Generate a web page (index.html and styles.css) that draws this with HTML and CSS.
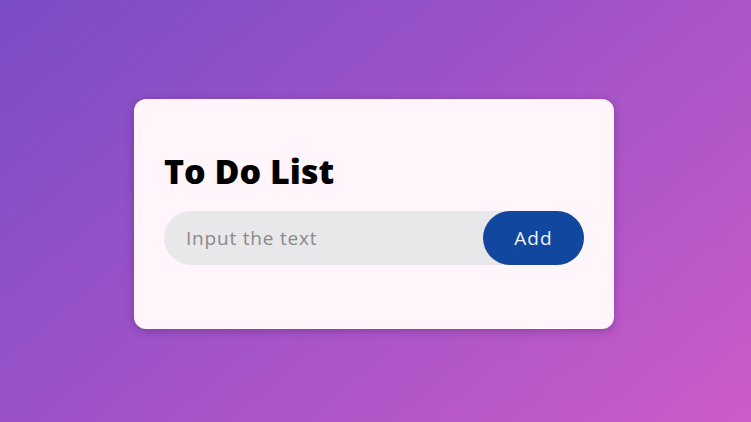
FILE: index.html
```html
<!DOCTYPE html>
<html lang="en">
<head>
<meta charset="utf-8">
<title>To Do List</title>
<link rel="stylesheet" href="styles.css">
</head>
<body>
<div class="page">
  <div class="card">
    <h2 class="title">To Do List</h2>
    <div class="row">
      <input class="field" type="text" placeholder="Input the text">
      <button class="add">Add</button>
    </div>
  </div>
</div>
</body>
</html>
```
FILE: styles.css
```css
* { box-sizing: border-box; margin: 0; padding: 0; }
html, body { width: 100%; height: 100%; }
body {
  font-family: "Open Sans", "Noto Sans", sans-serif;
  background: linear-gradient(140deg, #7a4cc6 0%, #cb5bc9 100%);
  overflow: hidden;
}
.page {
  height: 422px;
  display: flex;
  justify-content: center;
  padding-top: 99px;
  padding-right: 3px;
}
.card {
  width: 480px;
  height: 230px;
  background: #fff5fb;
  border-radius: 12px;
  box-shadow: 0 2px 8px rgba(60, 20, 90, 0.35);
  padding: 52px 30px 0 30px;
}
.title {
  font-size: 34px;
  font-weight: 800;
  color: #000;
  line-height: 40px;
  letter-spacing: 0;
  margin-bottom: 20px;
}
.row {
  display: flex;
  align-items: center;
  background: #e8e7e9;
  border-radius: 30px;
  height: 54px;
}
.field {
  flex: 1;
  min-width: 0;
  border: none;
  outline: none;
  background: transparent;
  padding-left: 22px;
  font-family: inherit;
  font-size: 19px;
  letter-spacing: 0.8px;
  color: #333;
}
.field::placeholder { color: #898989; }
.add {
  width: 101px;
  height: 54px;
  border: none;
  border-radius: 30px;
  background: #11479e;
  color: #f3f3f8;
  font-family: inherit;
  font-size: 19px;
  letter-spacing: 1px;
}
```
